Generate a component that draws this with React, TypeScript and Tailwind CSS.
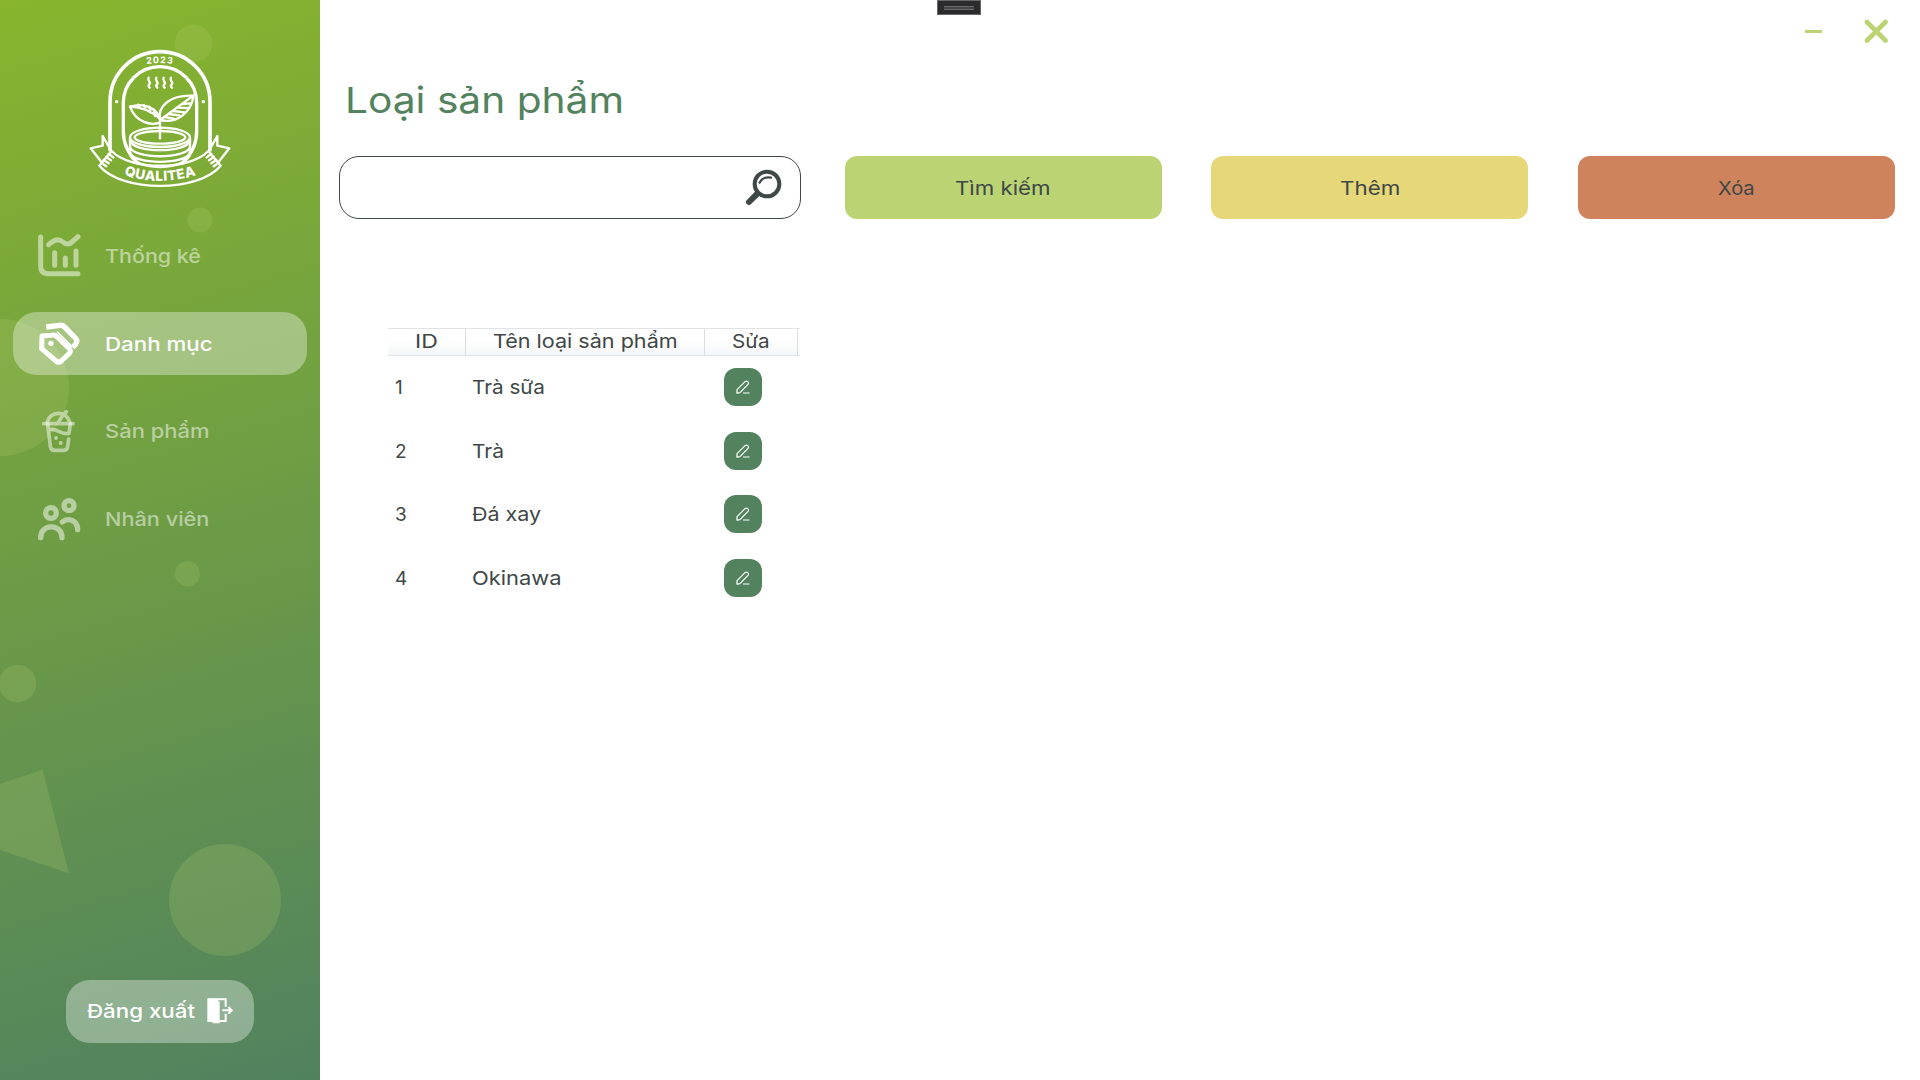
import { ReactNode, useLayoutEffect, useRef, useState } from "react";

/* Text stretched horizontally so that it fills a given width. */
function Label({ width, children, className = "" }: { width: number; children: string; className?: string }) {
  const ref = useRef<HTMLSpanElement>(null);
  const [scale, setScale] = useState(1);
  useLayoutEffect(() => {
    if (ref.current) setScale(width / ref.current.offsetWidth);
  }, [width]);
  return (
    <span className={"block shrink-0 pt-[3px] text-left whitespace-nowrap " + className} style={{ width }}>
      <span ref={ref} className="inline-block origin-left" style={{ transform: `scaleX(${scale})` }}>
        {children}
      </span>
    </span>
  );
}

function Logo() {
  return (
    <svg width="180" height="180" viewBox="0 0 540 540" fill="none" stroke="white" strokeWidth="7" strokeLinecap="round" strokeLinejoin="round">
      <path strokeWidth="11" d="M120 390V245a150 150 0 0 1 300 0V390" />
      <path strokeWidth="10" d="M202 428C174 400 160 370 160 335V248a110 108 0 0 1 220 0V335C380 370 366 400 338 428" />
      <circle cx="140" cy="245" r="5" fill="white" stroke="none" />
      <circle cx="400" cy="245" r="5" fill="white" stroke="none" />
      <path id="year-arc" stroke="none" d="M215 135Q270 124 325 135" />
      <text fill="white" stroke="none" fontFamily="Inter, sans-serif" fontWeight="700" fontSize="27" textAnchor="middle" letterSpacing="3">
        <textPath href="#year-arc" startOffset="50%">2023</textPath>
      </text>
      {[236, 259, 281, 303].map((x) => (
        <path key={x} d={`M${x} 173c-6 9 7 12 3 19c-5 4-4 7 0 11`} />
      ))}
      <path d="M270 300C262 258 300 224 370 227C365 277 320 312 270 300Z" />
      <path d="M270 300L370 227M337 252l26-2M323 263l32 1M309 273l35 4M296 282l32 4M284 291l27 5" />
      <path d="M270 296C258 262 220 247 180 260C197 306 240 318 270 308" />
      <path d="M180 260C225 262 250 278 270 296M205 254l5 10M222 255l4 14M238 260l4 18M252 269l3 19" />
      <path d="M270 295V355" />
      <ellipse cx="270" cy="352" rx="90" ry="29" />
      <ellipse cx="270" cy="352" rx="76" ry="19" />
      <path d="M180 354V404C190 425 212 438 270 441C328 438 350 425 360 404V354" />
      <path d="M180 362C190 400 350 400 360 362M180 381C190 418 350 418 360 381M180 400C195 434 345 434 360 400" />
      <path d="M125 393C180 452 360 452 415 393L452 437C385 518 155 518 88 437Z" />
      <path d="M122 390L98 348V377L62 385L92 423M418 390L442 348V377L478 385L448 423" />
      <path d="M116 402l14 10M108 411l15 10M101 420l15 10M94 429l15 10M424 402l-14 10M432 411l-15 10M439 420l-15 10M446 429l-15 10" />
      <path id="name-arc" stroke="none" d="M150 461Q270 504 390 461" />
      <text fill="white" stroke="none" fontFamily="Inter, sans-serif" fontWeight="800" fontSize="41" textAnchor="middle" textLength="220">
        <textPath href="#name-arc" startOffset="50%" textLength="220">QUALITEA</textPath>
      </text>
    </svg>
  );
}

const iconProps = {
  width: 44,
  height: 44,
  viewBox: "0 0 132 132",
  fill: "none",
  stroke: "currentColor",
  strokeLinecap: "round" as const,
  strokeLinejoin: "round" as const,
};

const ChartIcon = (
  <svg {...iconProps} strokeWidth="15">
    <path d="M11 9V97Q11 119 33 119H123" />
    <path d="M35 32Q60 8 78 24Q91 36 105 24L123 8" />
    <path d="M53 56V94M85 72V94M117 51V94" />
  </svg>
);
const TagIcon = (
  <svg {...iconProps}>
    <path strokeWidth="16" strokeLinecap="butt" d="M28 15L68 10Q77 9 83 15L115 48Q123 57 116 66L107 77" />
    <path strokeWidth="15" d="M15 42L46 39Q54 38 60 44L97 80Q103 87 97 94L73 117Q65 124 57 117L14 80Z" />
    <path strokeWidth="5" d="M62 31L102 71" />
    <circle cx="42" cy="64" r="8" fill="currentColor" stroke="none" />
  </svg>
);
const DrinkIcon = (
  <svg {...iconProps} strokeWidth="11">
    <path d="M31 43C34 3 94 3 98 43M20 44H108M88 8L80 16L64 40" />
    <path d="M32 44L40 112Q42 124 53 124H80Q91 124 92 112L95 90M100 44L96 73C72 79 62 56 36 62" />
    <circle cx="57" cy="87" r="6" fill="currentColor" stroke="none" />
    <circle cx="71" cy="102" r="6" fill="currentColor" stroke="none" />
  </svg>
);
const PeopleIcon = (
  <svg {...iconProps} strokeWidth="16">
    <circle cx="42" cy="48" r="16" />
    <circle cx="96" cy="26" r="15" />
    <path d="M11 122C11 79 75 79 75 122M76 75C92 61 122 69 122 98" />
  </svg>
);

function NavItem({ icon, text, width, active }: { icon: ReactNode; text: string; width: number; active?: boolean }) {
  return (
    <a
      className={
        "flex h-[63px] w-[294px] items-center gap-6 rounded-[24px] pl-6 text-[19px] font-medium " +
        (active ? "bg-white/35 text-white" : "text-white/50")
      }
    >
      {icon}
      <Label width={width}>{text}</Label>
    </a>
  );
}

function Sidebar() {
  return (
    <aside className="relative flex h-full w-80 shrink-0 flex-col items-center overflow-hidden bg-[linear-gradient(164deg,#88b52d_0%,#51825f_100%)]">
      <svg className="absolute inset-0" width="320" height="1080" fill="#bbd373" fillOpacity="0.2">
        <circle cx="193.5" cy="43.5" r="18.7" />
        <circle cx="200" cy="220" r="12.5" />
        <circle cx="0.5" cy="387.5" r="68.5" />
        <circle cx="187.5" cy="573.7" r="12.5" />
        <circle cx="17.5" cy="683.5" r="18.7" />
        <path d="M0 784L42.7 769.7L69 873.5L0 850Z" />
        <circle cx="225" cy="900" r="56" />
      </svg>
      <div className="relative mt-5 h-[180px]">
        <Logo />
      </div>
      <nav className="relative mt-[24.5px] flex flex-col gap-[24.5px]">
        <NavItem icon={ChartIcon} text="Thống kê" width={96} />
        <NavItem icon={TagIcon} text="Danh mục" width={108} active />
        <NavItem icon={DrinkIcon} text="Sản phẩm" width={104} />
        <NavItem icon={PeopleIcon} text="Nhân viên" width={104} />
      </nav>
      <button className="relative mt-auto mb-[37.5px] flex h-[63px] w-[188px] items-center rounded-[24px] bg-white/35 pl-[21px] text-[19px] font-medium text-white">
        <Label width={108}>Đăng xuất</Label>
        <svg className="ml-3" width="26" height="26" viewBox="0 0 78 78" fill="none" stroke="white" strokeWidth="6">
          <path d="M1 2H33V10H38V76H17V72H1Z" fill="white" stroke="none" />
          <path d="M2 4H56V26M56 47V69H36" />
          <path d="M46 37H73M64 27L74 37L64 47" />
        </svg>
      </button>
    </aside>
  );
}

const categories = [
  { id: 1, name: "Trà sữa", width: 73 },
  { id: 2, name: "Trà", width: 32 },
  { id: 3, name: "Đá xay", width: 69 },
  { id: 4, name: "Okinawa", width: 90 },
];

function CategoryTable() {
  return (
    <div className="mt-[109px] ml-[68px] w-[412px] text-[19px] text-[#3f4747]">
      <div className="mb-[-1px] flex h-7 items-center border-t border-b border-[#e2e3e4] bg-linear-to-b from-white from-40% to-[#f5f6f7]">
        <div className="flex h-full w-[78px] items-center justify-center border-r border-[#dcdddf]">
          <Label width={23} className="-mt-0.5">ID</Label>
        </div>
        <div className="flex h-full w-[239px] items-center justify-center border-r border-[#dcdddf]">
          <Label width={185} className="-mt-0.5">Tên loại sản phẩm</Label>
        </div>
        <div className="flex h-full w-[93px] items-center justify-center border-r border-[#dcdddf]">
          <Label width={38} className="-mt-0.5">Sửa</Label>
        </div>
      </div>
      {categories.map(({ id, name, width }) => (
        <div key={id} className="flex h-[63.7px] items-center">
          <div className="w-[84px] pt-[3px] pl-[7px]">{id}</div>
          <div className="w-[252px]">
            <Label width={width}>{name}</Label>
          </div>
          <button className="flex size-[38px] items-center justify-center rounded-xl bg-[#52825e]">
            <svg width="14" height="14" viewBox="0 0 14 14" fill="none" stroke="white" strokeWidth="1.2">
              <path d="M1 13V9.7L9 1.7Q10.3 .4 11.7 1.6Q13.2 3 12 4.3L4.2 12.4Q3.6 12.9 3 12.9ZM7 13H13.5" />
            </svg>
          </button>
        </div>
      ))}
    </div>
  );
}

export default function App() {
  return (
    <div className="flex h-[1080px] w-[1920px] overflow-hidden bg-white font-['Inter',sans-serif] text-[#3f4747]">
      <Sidebar />
      <main className="relative min-w-0 flex-1">
        <div className="absolute top-0 left-[617px] flex h-[15px] w-[44px] items-center justify-center border border-[#68686a] bg-[#2b2b2d]">
          <div className="h-1 w-[30px] border-y border-[#68686a] bg-[#454547]" />
        </div>
        <header className="flex h-[63px] justify-end gap-[42px] pt-[19px] pr-8">
          <svg width="17" height="24" stroke="#bbd373" strokeWidth="3">
            <path d="M0 12.5H17" />
          </svg>
          <svg width="24" height="24" stroke="#bbd373" strokeWidth="4.6" strokeLinecap="round">
            <path d="M3 3L21.5 21.5M21.5 3L3 21.5" />
          </svg>
        </header>
        <h1 className="ml-[25px] flex h-[71px] items-center text-[36px] leading-none text-[#52825e]">
          <Label width={279}>Loại sản phẩm</Label>
        </h1>
        <div className="mt-[22px] ml-[19px] flex w-[1556px] gap-[49.5px] text-[19px]">
          <div className="mr-[-6px] flex h-[63px] w-[462px] items-center justify-end rounded-[20px] border border-[#3f4747] pr-[18px]">
            <svg width="37" height="37" viewBox="0 0 111 111" fill="none" stroke="#3f4747" strokeLinecap="round">
              <circle cx="66" cy="45" r="37" strokeWidth="12" />
              <path strokeWidth="18" d="M12 99L35 76" />
              <path strokeWidth="7" d="M44 41Q52 22 78 26" />
            </svg>
          </div>
          <button className="flex h-[63px] w-[317px] items-center justify-center rounded-xl bg-[#bbd373]">
            <Label width={96}>Tìm kiếm</Label>
          </button>
          <button className="flex h-[63px] w-[317px] items-center justify-center rounded-xl bg-[#e6d779]">
            <Label width={60}>Thêm</Label>
          </button>
          <button className="flex h-[63px] w-[317px] items-center justify-center rounded-xl bg-[#ce835d]">
            <Label width={37}>Xóa</Label>
          </button>
        </div>
        <CategoryTable />
      </main>
    </div>
  );
}
